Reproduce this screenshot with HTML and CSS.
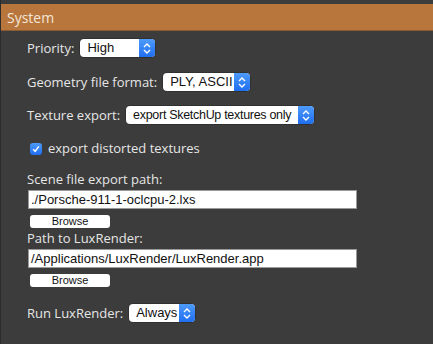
FILE: index.html
```html
<!DOCTYPE html>
<html lang="en">
<head>
  <meta charset="UTF-8" />
  <title>System – LuxRender export settings</title>
  <link rel="stylesheet" href="styles.css">
</head>
<body>

  <div class="top-strip"></div>

  <!-- Section header -->
  <div class="section-head">System</div>

  <div class="panel">
    <!-- Priority -->
    <div class="row row-priority">
      <span class="label">Priority:</span>
      <div class="select w-priority">
        <span class="select-text">High</span>
        <span class="stepper">
          <svg width="8" height="11" viewBox="0 0 8 11"><path d="M1 4 L4 1 L7 4 M1 7 L4 10 L7 7" fill="none" stroke="#fff" stroke-width="1.4"/></svg>
        </span>
      </div>
    </div>

    <!-- Geometry -->
    <div class="row row-geometry">
      <span class="label">Geometry file format:</span>
      <div class="select w-geometry">
        <span class="select-text">PLY, ASCII</span>
        <span class="stepper">
          <svg width="8" height="11" viewBox="0 0 8 11"><path d="M1 4 L4 1 L7 4 M1 7 L4 10 L7 7" fill="none" stroke="#fff" stroke-width="1.4"/></svg>
        </span>
      </div>
    </div>

    <!-- Texture export -->
    <div class="row row-texture">
      <span class="label">Texture export:</span>
      <div class="select w-texture">
        <span class="select-text tight">export SketchUp textures only</span>
        <span class="stepper">
          <svg width="8" height="11" viewBox="0 0 8 11"><path d="M1 4 L4 1 L7 4 M1 7 L4 10 L7 7" fill="none" stroke="#fff" stroke-width="1.4"/></svg>
        </span>
      </div>
    </div>

    <!-- Distorted textures -->
    <div class="row row-check">
      <span class="checkbox">
        <svg width="12" height="12" viewBox="0 0 12 12"><path d="M3.2 6.3 L5.2 8.4 L8.8 3.4" fill="none" stroke="#fff" stroke-width="1.5"/></svg>
      </span>
      <span class="label">export distorted textures</span>
    </div>

    <!-- Scene file path -->
    <div class="field field-scene">
      <div class="label">Scene file export path:</div>
      <div class="text-input">./Porsche-911-1-oclcpu-2.lxs</div>
      <div class="btn-browse">Browse</div>
    </div>

    <!-- LuxRender path -->
    <div class="field field-lux">
      <div class="label">Path to LuxRender:</div>
      <div class="text-input">/Applications/LuxRender/LuxRender.app</div>
      <div class="btn-browse">Browse</div>
    </div>

    <!-- Run LuxRender -->
    <div class="row row-run">
      <span class="label">Run LuxRender:</span>
      <div class="select w-run">
        <span class="select-text">Always</span>
        <span class="stepper">
          <svg width="8" height="11" viewBox="0 0 8 11"><path d="M1 4 L4 1 L7 4 M1 7 L4 10 L7 7" fill="none" stroke="#fff" stroke-width="1.4"/></svg>
        </span>
      </div>
    </div>
  </div>

</body>
</html>
```

FILE: styles.css
```css
:root {
  --bg: #3c3c3c;
  --head: #b8763c;
  --head-text: #f3e6d8;
  --label: #e6e6e6;
  --blue-top: #4d9bfa;
  --blue-bottom: #1f6ef0;
}

* {
  box-sizing: border-box;
  margin: 0;
  padding: 0;
}

body {
  background: var(--bg);
  font-family: 'Open Sans', 'DejaVu Sans', sans-serif;
  width: 433px;
  height: 344px;
  overflow: hidden;
  border-left: 1px solid #2c2c2c;
}

.top-strip {
  height: 4px;
}

.section-head {
  height: 27px;
  background: var(--head);
  color: var(--head-text);
  font-size: 14px;
  line-height: 27px;
  padding-left: 6px;
  border-bottom: 1px solid #8a5a30;
}

.panel {
  padding-left: 26px;
}

.label {
  color: var(--label);
  font-size: 13px;
  line-height: 17px;
}

.row {
  display: flex;
  align-items: center;
}

.row .label {
  margin-right: 6px;
}

.row-priority { margin-top: 8px; }
.row-geometry { margin-top: 16px; }
.row-texture { margin-top: 15px; }
.row-check { margin-top: 16px; }
.row-run { margin-top: 17px; }

/* Popup buttons */
.select {
  display: flex;
  height: 18px;
  background: #fff;
  border-radius: 4px;
  overflow: hidden;
  box-shadow: 0 0 0 0.5px rgba(0, 0, 0, 0.4);
}

.select-text {
  flex: 1;
  min-width: 0;
  overflow: hidden;
  font-family: 'Liberation Sans', Arial, sans-serif;
  font-size: 13px;
  line-height: 18px;
  color: #111;
  padding-left: 7px;
  white-space: nowrap;
}

.select-text.tight {
  font-size: 12.5px;
  letter-spacing: -0.3px;
}

.stepper {
  width: 16px;
  flex-shrink: 0;
  display: flex;
  align-items: center;
  justify-content: center;
  background: linear-gradient(var(--blue-top), var(--blue-bottom));
}

.w-priority { width: 75px; }
.w-geometry { width: 87px; }
.w-texture { width: 188px; }
.w-run { width: 66px; }

/* Checkbox */
.checkbox {
  width: 12px;
  height: 12px;
  margin-left: 3px;
  margin-right: 6px;
  border-radius: 3px;
  background: linear-gradient(var(--blue-top), var(--blue-bottom));
  display: flex;
}

/* Path fields */
.field-scene { margin-top: 14px; }
.field-lux { margin-top: 2px; }

.text-input {
  width: 329px;
  height: 19px;
  margin-top: 2px;
  margin-left: 1px;
  background: #fff;
  border: 1px solid #9a9a9a;
  font-family: 'Liberation Sans', Arial, sans-serif;
  font-size: 13px;
  line-height: 17px;
  color: #111;
  padding-left: 2px;
}

.btn-browse {
  width: 80px;
  height: 13px;
  margin-top: 6px;
  margin-left: 3px;
  background: #fff;
  border-radius: 3px;
  font-family: 'Liberation Sans', Arial, sans-serif;
  font-size: 11px;
  line-height: 13px;
  text-align: center;
  color: #111;
}
```
